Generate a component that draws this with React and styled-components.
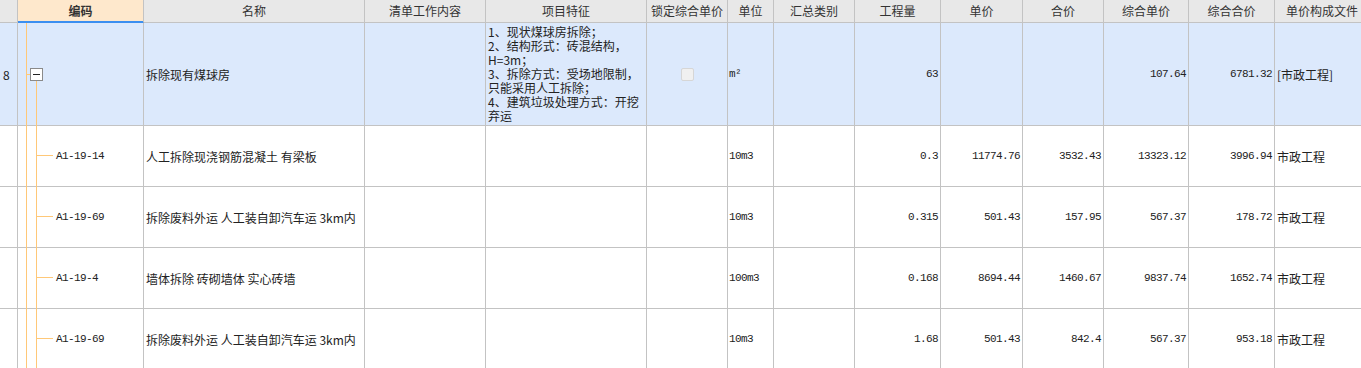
import styled, { createGlobalStyle } from "styled-components"

const GlobalStyle = createGlobalStyle`
    html, body{
        margin: 0;
        padding: 0;
        background: #fff;
        overflow: hidden;
    }
    body{
        font-family: "Noto Sans CJK SC", "Noto Sans", sans-serif;
        font-size: 12px;
        color: #222;
    }
`

const LINE = '#c3c3c3'
const TREE = '#ffc878'

const columns = [
    {key:'no', title:'', width:18},
    {key:'code', title:'编码', width:126, active:true},
    {key:'name', title:'名称', width:221},
    {key:'work', title:'清单工作内容', width:121},
    {key:'feature', title:'项目特征', width:161},
    {key:'lock', title:'锁定综合单价', width:81},
    {key:'unit', title:'单位', width:46},
    {key:'sum', title:'汇总类别', width:81},
    {key:'qty', title:'工程量', width:86, num:true},
    {key:'price', title:'单价', width:82, num:true},
    {key:'total', title:'合价', width:81, num:true},
    {key:'cprice', title:'综合单价', width:85, num:true},
    {key:'ctotal', title:'综合合价', width:86, num:true},
    {key:'file', title:'单价构成文件', width:95},
]

const feature = `1、现状煤球房拆除；
2、结构形式：砖混结构，
H=3m；
3、拆除方式：受场地限制，
只能采用人工拆除；
4、建筑垃圾处理方式：开挖
弃运`

const rows = [
    {parent:true, height:102, no:'8', name:'拆除现有煤球房', feature, lock:true, unit:'m²', qty:'63', cprice:'107.64', ctotal:'6781.32', file:'[市政工程]'},
    {height:60, code:'A1-19-14', name:'人工拆除现浇钢筋混凝土 有梁板', unit:'10m3', qty:'0.3', price:'11774.76', total:'3532.43', cprice:'13323.12', ctotal:'3996.94', file:'市政工程'},
    {height:60, code:'A1-19-69', name:'拆除废料外运 人工装自卸汽车运 3km内', unit:'10m3', qty:'0.315', price:'501.43', total:'157.95', cprice:'567.37', ctotal:'178.72', file:'市政工程'},
    {height:60, code:'A1-19-4', name:'墙体拆除 砖砌墙体 实心砖墙', unit:'100m3', qty:'0.168', price:'8694.44', total:'1460.67', cprice:'9837.74', ctotal:'1652.74', file:'市政工程'},
    {height:60, code:'A1-19-69', name:'拆除废料外运 人工装自卸汽车运 3km内', unit:'10m3', qty:'1.68', price:'501.43', total:'842.4', cprice:'567.37', ctotal:'953.18', file:'市政工程'},
]

const Grid = styled.div`
    display: grid;
    grid-template-columns: ${columns.map(c=>c.width+'px').join(' ')};
    width: max-content;
`

const HeadCell = styled.div`
    height: 22px;
    line-height: 22px;
    text-align: center;
    white-space: nowrap;
    overflow: hidden;
    background: ${p=>p.$active ? '#fee8cc' : '#e8e8e8'};
    font-weight: ${p=>p.$active ? 'bold' : 'normal'};
    color: #333;
    border-right: 1px solid ${LINE};
    border-bottom: 1px solid ${p=>p.$active ? '#3c8ff0' : LINE};
    box-shadow: ${p=>p.$active ? 'inset 0 -1px 0 #3c8ff0' : 'none'};
`

const Cell = styled.div`
    position: relative;
    height: ${p=>p.$h}px;
    display: flex;
    align-items: center;
    justify-content: ${p=>p.$num ? 'flex-end' : p.$center ? 'center' : 'flex-start'};
    padding: 0 2px 0 ${p=>p.$pl ?? 2}px;
    box-sizing: content-box;
    width: ${p=>p.$w - 1 - 2 - (p.$pl ?? 2)}px;
    background: ${p=>p.$sel ? '#dce9fc' : '#fff'};
    border-right: 1px solid ${LINE};
    border-bottom: 1px solid ${LINE};
    white-space: nowrap;
`

const Num = styled.span`
    font-family: "Liberation Mono", monospace;
    font-size: 11px;
    letter-spacing: -0.6px;
    color: #222;
`

const Feature = styled.div`
    white-space: pre;
    line-height: 14px;
    font-size: 12px;
`

const CheckBox = styled.span`
    width: 11px;
    height: 11px;
    border: 1px solid #d6d6d6;
    border-radius: 2px;
    background: #f0f0f0;
`

const CodeText = styled(Num)`
    margin-left: 38px;
`

const TreeSvg = styled.svg`
    position: absolute;
    left: 0;
    top: 0;
    pointer-events: none;
`

function Tree({parent,height}){
    const h = height + 1
    const mid = Math.floor(height/2)
    if(parent){
        return(
            <TreeSvg width="40" height={h}>
                <line x1="8.5" y1="0" x2="8.5" y2={h} stroke={TREE} />
                <line x1="8" y1={mid+0.5} x2="12" y2={mid+0.5} stroke={TREE} />
                <rect x="12.5" y={mid-5.5} width="12" height="12" fill="#fff" stroke="#8a8a8a" />
                <line x1="15" y1={mid+0.5} x2="22" y2={mid+0.5} stroke="#222" />
                <line x1="18.5" y1={mid+7} x2="18.5" y2={h} stroke={TREE} />
            </TreeSvg>
        )
    }
    return(
        <TreeSvg width="40" height={h}>
            <line x1="8.5" y1="0" x2="8.5" y2={h} stroke={TREE} />
            <line x1="18.5" y1="0" x2="18.5" y2={h} stroke={TREE} />
            <line x1="18" y1={mid-0.5} x2="35" y2={mid-0.5} stroke={TREE} />
        </TreeSvg>
    )
}

function renderCell(col,row){
    const v = row[col.key]
    switch(col.key){
        case 'no': return v
        case 'code': return(
            <>
                <Tree parent={row.parent} height={row.height} />
                {v && <CodeText>{v}</CodeText>}
            </>
        )
        case 'feature': return v ? <Feature>{v}</Feature> : null
        case 'lock': return v ? <CheckBox /> : null
        case 'unit': return v ? <Num>{v}</Num> : null
        default:
            if(col.num) return v ? <Num>{v}</Num> : null
            return v
    }
}

export default function App(){
    return(
        <>
        <GlobalStyle />
        <Grid>
            {columns.map(c=>(
                <HeadCell key={c.key} $active={c.active}>{c.title}</HeadCell>
            ))}
            {rows.map((r,i)=>columns.map(c=>(
                <Cell
                    key={i+c.key}
                    $h={r.height}
                    $w={c.width}
                    $num={c.num}
                    $center={c.key==='lock'}
                    $pl={c.key==='no' ? 3 : c.key==='code' ? 0 : c.key==='unit' ? 1 : 2}
                    $sel={r.parent}
                >
                    {renderCell(c,r)}
                </Cell>
            )))}
        </Grid>
        </>
    )
}
